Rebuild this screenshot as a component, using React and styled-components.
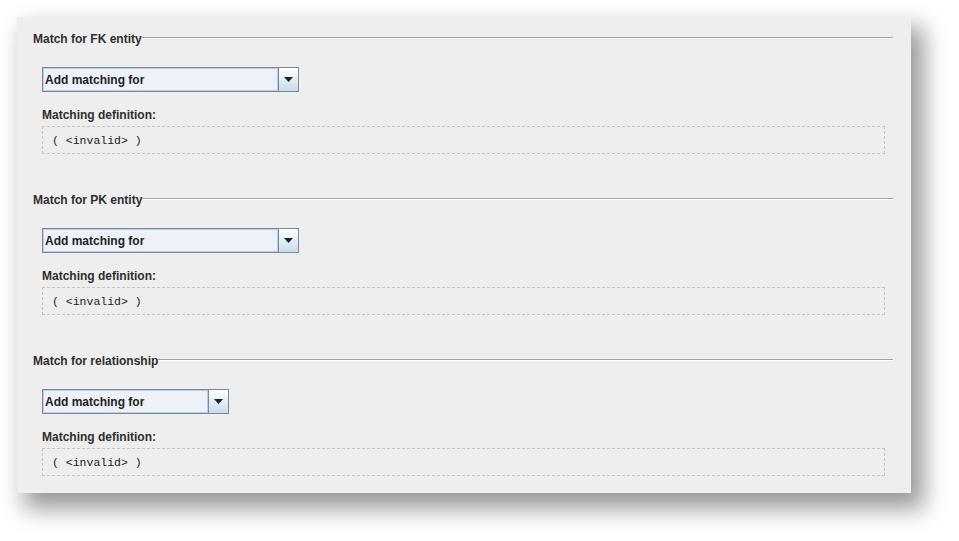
import styled, { createGlobalStyle } from 'styled-components';

const GlobalStyle = createGlobalStyle`
  body {
    margin: 0;
    background: #ffffff;
    font-family: 'Liberation Sans', Arial, sans-serif;
  }
`;

const sections = [
  { title: 'Match for FK entity', comboWidth: 257 },
  { title: 'Match for PK entity', comboWidth: 257 },
  { title: 'Match for relationship', comboWidth: 187 },
];

const App = () => (
  <>
    <GlobalStyle />
    <Page>
      <Panel>
        {sections.map((s) => (
          <Section key={s.title}>
            <TitleRow>
              <Title>{s.title}</Title>
              <Etched />
            </TitleRow>
            <Body>
              <Combo $width={s.comboWidth}>
                <ComboField>Add matching for</ComboField>
                <ComboButton>
                  <svg width="9" height="5" viewBox="0 0 9 5">
                    <path d="M0 0h9L4.5 5z" fill="#222" />
                  </svg>
                </ComboButton>
              </Combo>
              <Label>Matching definition:</Label>
              <Definition>( &lt;invalid&gt; )</Definition>
            </Body>
          </Section>
        ))}
      </Panel>
    </Page>
  </>
);

const Page = styled.div`
  height: 541px;
  box-sizing: border-box;
  padding: 17px 0 0 17px;
`;

const Panel = styled.div`
  width: 894px;
  height: 476px;
  box-sizing: border-box;
  padding: 15px 18px 0 16px;
  background: #eeeeee;
  box-shadow: 10px 13px 22px 3px rgba(0, 0, 0, 0.4);
  display: flex;
  flex-direction: column;
  gap: 39px;
`;

const Section = styled.section`
  display: flex;
  flex-direction: column;
`;

const TitleRow = styled.div`
  display: flex;
  align-items: center;
  height: 14px;
`;

const Title = styled.span`
  font-size: 12px;
  font-weight: bold;
  color: #2e2e2e;
  line-height: 14px;
  white-space: nowrap;
`;

const Etched = styled.div`
  flex: 1;
  height: 1px;
  background: #a3a3a3;
  border-bottom: 1px solid #ffffff;
  margin-top: -3px;
`;

const Body = styled.div`
  display: flex;
  flex-direction: column;
  padding: 21px 8px 0 9px;
`;

const Combo = styled.div`
  display: flex;
  width: ${(p) => p.$width}px;
  height: 25px;
  box-sizing: border-box;
  border: 1px solid #7a8a9c;
  background: #eef2f8;
`;

const ComboField = styled.div`
  flex: 1;
  border: 1px solid #b8cfe5;
  padding-left: 1px;
  font-size: 12px;
  font-weight: bold;
  color: #222222;
  display: flex;
  align-items: center;
`;

const ComboButton = styled.div`
  width: 19px;
  border-left: 1px solid #7a8a9c;
  background: linear-gradient(#ffffff, #c9dbee);
  display: flex;
  align-items: center;
  justify-content: center;
`;

const Label = styled.div`
  margin-top: 16px;
  font-size: 12px;
  font-weight: bold;
  color: #2e2e2e;
  line-height: 14px;
`;

const Definition = styled.div`
  margin-top: 4px;
  height: 28px;
  box-sizing: border-box;
  border: 1px dashed #c4c4c4;
  padding-left: 9px;
  display: flex;
  align-items: center;
  font-family: 'Liberation Mono', 'Courier New', monospace;
  font-size: 11.5px;
  color: #222222;
`;

export default App;
